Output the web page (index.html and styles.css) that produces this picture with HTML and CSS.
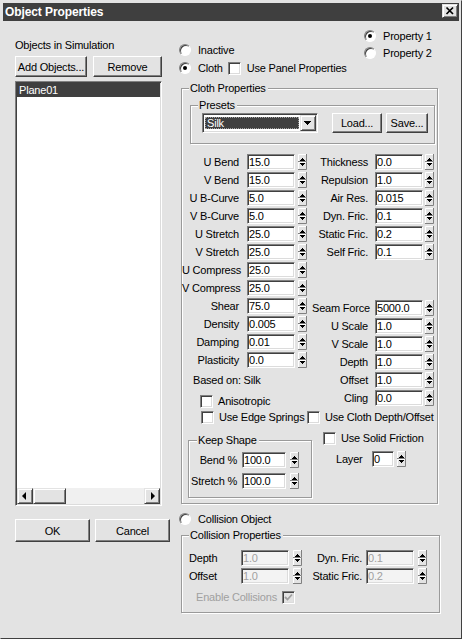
FILE: index.html
```html
<!DOCTYPE html>
<html lang="en">
<head>
<meta charset="utf-8">
<title>Object Properties</title>
<link rel="stylesheet" href="styles.css">
</head>
<body>
<svg class="defs" width="0" height="0" aria-hidden="true">
  <symbol id="spin" viewBox="0 0 9 16">
    <rect width="9" height="16" fill="#e3e3e3"/>
    <path d="M0.5 7.5V0.5H8.5M0.5 15.5V8.5H8.5" stroke="#fff" fill="none"/>
    <path d="M8.5 0V7.5H0M8.5 8V15.5H0" stroke="#808080" fill="none"/>
    <path d="M4 4h1v1h1v1h1v1H2V6h1V5h1z M2 9h5v1h-1v1h-1v1h-1v-1h-1v-1h-1z" fill="#000"/>
  </symbol>
</svg>
<div class="win">
  <div class="titlebar">
    <span class="ttl">Object Properties</span>
    <span class="closebtn rb"><svg width="14" height="12" viewBox="0 0 14 12"><path d="M3.5 2.5L10 9M10 2.5L3.5 9" stroke="#000" stroke-width="1.7" fill="none"/></svg></span>
  </div>
  <div class="main">
    <div class="leftcol">
      <div class="cap">Objects in Simulation</div>
      <div class="btnrow">
        <div class="btn w-add">Add Objects...</div>
        <div class="btn w-rem">Remove</div>
      </div>
      <div class="list">
        <div class="item">Plane01</div>
        <div class="listspace"></div>
        <div class="hscroll">
          <div class="rb sbtn"><svg width="14" height="14" viewBox="0 0 14 14"><path d="M8 3v8L4 7z" fill="#000"/></svg></div>
          <div class="rb thumb"></div>
          <div class="track"></div>
          <div class="rb sbtn"><svg width="14" height="14" viewBox="0 0 14 14"><path d="M6 3v8l4-4z" fill="#000"/></svg></div>
        </div>
      </div>
      <div class="okrow">
        <div class="btn w-ok">OK</div>
        <div class="btn w-ok">Cancel</div>
      </div>
    </div>
    <div class="rightcol">
      <div class="topopts">
        <div class="modes">
          <div class="opt"><span class="rd"></span>Inactive</div>
          <div class="opt"><span class="rd on"></span>Cloth<span class="cb panelcb"></span><span class="cbt">Use Panel Properties</span></div>
        </div>
        <div class="props">
          <div class="opt"><span class="rd on"></span>Property 1</div>
          <div class="opt"><span class="rd"></span>Property 2</div>
        </div>
      </div>
      <div class="grp cloth">
        <div class="gt">Cloth Properties</div>
        <div class="grp presets">
          <div class="gt">Presets</div>
          <div class="prow">
            <div class="combo">
              <div class="sel">Silk</div>
              <div class="rb carrow"><svg width="14" height="14" viewBox="0 0 14 14"><path d="M3 5h7v1h-1v1h-1v1h-1v1h-1v-1h-1v-1h-1v-1h-1z" fill="#000"/></svg></div>
            </div>
            <div class="btn w-load">Load...</div>
            <div class="btn w-save">Save...</div>
          </div>
        </div>
        <div class="params">
          <div class="pcol pl">
            <div class="f"><span class="lb">U Bend</span><span class="tb">15.0</span><svg class="spin"><use href="#spin"/></svg></div>
            <div class="f"><span class="lb">V Bend</span><span class="tb">15.0</span><svg class="spin"><use href="#spin"/></svg></div>
            <div class="f"><span class="lb">U B-Curve</span><span class="tb">5.0</span><svg class="spin"><use href="#spin"/></svg></div>
            <div class="f"><span class="lb">V B-Curve</span><span class="tb">5.0</span><svg class="spin"><use href="#spin"/></svg></div>
            <div class="f"><span class="lb">U Stretch</span><span class="tb">25.0</span><svg class="spin"><use href="#spin"/></svg></div>
            <div class="f"><span class="lb">V Stretch</span><span class="tb">25.0</span><svg class="spin"><use href="#spin"/></svg></div>
            <div class="f"><span class="lb">U Compress</span><span class="tb">25.0</span><svg class="spin"><use href="#spin"/></svg></div>
            <div class="f"><span class="lb">V Compress</span><span class="tb">25.0</span><svg class="spin"><use href="#spin"/></svg></div>
            <div class="f"><span class="lb">Shear</span><span class="tb">75.0</span><svg class="spin"><use href="#spin"/></svg></div>
            <div class="f"><span class="lb">Density</span><span class="tb">0.005</span><svg class="spin"><use href="#spin"/></svg></div>
            <div class="f"><span class="lb">Damping</span><span class="tb">0.01</span><svg class="spin"><use href="#spin"/></svg></div>
            <div class="f"><span class="lb">Plasticity</span><span class="tb">0.0</span><svg class="spin"><use href="#spin"/></svg></div>
            <div class="based">Based on: Silk</div>
            <div class="opt aniso"><span class="cb"></span><span class="cbt">Anisotropic</span></div>
          </div>
          <div class="pcol pr">
            <div class="f"><span class="lb">Thickness</span><span class="tb">0.0</span><svg class="spin"><use href="#spin"/></svg></div>
            <div class="f"><span class="lb">Repulsion</span><span class="tb">1.0</span><svg class="spin"><use href="#spin"/></svg></div>
            <div class="f"><span class="lb">Air Res.</span><span class="tb">0.015</span><svg class="spin"><use href="#spin"/></svg></div>
            <div class="f"><span class="lb">Dyn. Fric.</span><span class="tb">0.1</span><svg class="spin"><use href="#spin"/></svg></div>
            <div class="f"><span class="lb">Static Fric.</span><span class="tb">0.2</span><svg class="spin"><use href="#spin"/></svg></div>
            <div class="f"><span class="lb">Self Fric.</span><span class="tb">0.1</span><svg class="spin"><use href="#spin"/></svg></div>
            <div class="pgap"></div>
            <div class="f"><span class="lb">Seam Force</span><span class="tb">5000.0</span><svg class="spin"><use href="#spin"/></svg></div>
            <div class="f"><span class="lb">U Scale</span><span class="tb">1.0</span><svg class="spin"><use href="#spin"/></svg></div>
            <div class="f"><span class="lb">V Scale</span><span class="tb">1.0</span><svg class="spin"><use href="#spin"/></svg></div>
            <div class="f"><span class="lb">Depth</span><span class="tb">1.0</span><svg class="spin"><use href="#spin"/></svg></div>
            <div class="f"><span class="lb">Offset</span><span class="tb">1.0</span><svg class="spin"><use href="#spin"/></svg></div>
            <div class="f"><span class="lb">Cling</span><span class="tb">0.0</span><svg class="spin"><use href="#spin"/></svg></div>
          </div>
        </div>
        <div class="opt edge">
          <span class="c1"><span class="cb"></span><span class="cbt">Use Edge Springs</span></span>
          <span class="cb"></span><span class="cbt">Use Cloth Depth/Offset</span>
        </div>
        <div class="bottom">
          <div class="grp keep">
            <div class="gt">Keep Shape</div>
            <div class="kf k1"><span class="lb">Bend %</span><span class="tb">100.0</span><svg class="spin"><use href="#spin"/></svg></div>
            <div class="kf k2"><span class="lb">Stretch %</span><span class="tb">100.0</span><svg class="spin"><use href="#spin"/></svg></div>
          </div>
          <div class="rside">
            <div class="opt"><span class="cb"></span><span class="cbt">Use Solid Friction</span></div>
            <div class="f layer"><span class="lb">Layer</span><span class="tb">0</span><svg class="spin"><use href="#spin"/></svg></div>
          </div>
        </div>
      </div>
      <div class="opt collobj"><span class="rd"></span>Collision Object</div>
      <div class="grp coll">
        <div class="gt">Collision Properties</div>
        <div class="crow">
          <div class="ccl">
            <div class="f"><span class="lb">Depth</span><span class="tb dis">1.0</span><svg class="spin"><use href="#spin"/></svg></div>
            <div class="f"><span class="lb">Offset</span><span class="tb dis">1.0</span><svg class="spin"><use href="#spin"/></svg></div>
          </div>
          <div class="ccr">
            <div class="f"><span class="lb">Dyn. Fric.</span><span class="tb dis">0.1</span><svg class="spin"><use href="#spin"/></svg></div>
            <div class="f"><span class="lb">Static Fric.</span><span class="tb dis">0.2</span><svg class="spin"><use href="#spin"/></svg></div>
          </div>
        </div>
        <div class="opt enable">Enable Collisions<span class="cb"><svg width="9" height="9" viewBox="0 0 9 9"><path d="M1 4l2.5 2.5L8 1.5" stroke="#a0a0a0" stroke-width="1.8" fill="none"/></svg></span></div>
      </div>
    </div>
  </div>
</div>
</body>
</html>
```

FILE: styles.css
```css
* { box-sizing: border-box; }
html, body { margin: 0; padding: 0; }
body {
  font-family: "Liberation Sans", Arial, sans-serif;
  font-size: 11px;
  letter-spacing: -0.2px;
  color: #000;
  background: #e3e3e3;
}
.defs { display: block; width: 0; height: 0; overflow: hidden; }

.win {
  width: 462px;
  height: 639px;
  border: 1px solid;
  border-color: #e3e3e3 #404040 #404040 #e3e3e3;
  padding: 2px;
  background: #e3e3e3;
  display: flex;
  flex-direction: column;
}
.titlebar {
  height: 18px;
  flex: none;
  background: #3f3f3f;
  color: #fff;
  display: flex;
  align-items: flex-start;
  padding-left: 2px;
}
.ttl { font-weight: bold; font-size: 12px; letter-spacing: -0.1px; line-height: 18px; }
.closebtn {
  margin-left: auto;
  margin-top: 1px;
  margin-right: 1px;
  width: 16px;
  height: 14px;
  display: flex;
  align-items: center;
  justify-content: center;
}

.rb {
  background: #e3e3e3;
  border: 1px solid;
  border-color: #e3e3e3 #404040 #404040 #e3e3e3;
  box-shadow: inset 1px 1px #fff, inset -1px -1px #808080;
}
.btn {
  background: #e3e3e3;
  border: 1px solid;
  border-color: #fff #404040 #404040 #fff;
  box-shadow: inset -1px -1px #808080;
  display: flex;
  align-items: center;
  justify-content: center;
  white-space: nowrap;
  height: 21px;
  flex: none;
}

.main { display: flex; flex: 1; }
.leftcol { width: 155px; margin-left: 12px; display: flex; flex-direction: column; flex: none; }
.cap { margin-top: 17px; height: 14px; line-height: 14px; }
.btnrow { display: flex; margin-top: 4px; }
.w-add { width: 72px; }
.w-rem { width: 69px; margin-left: 6px; }
.list {
  margin-top: 4px;
  width: 147px;
  height: 425px;
  background: #fff;
  border: 1px solid;
  border-color: #808080 #fff #fff #808080;
  box-shadow: inset 1px 1px #404040, inset -1px -1px #dcdcdc;
  padding: 1px;
  display: flex;
  flex-direction: column;
}
.item { height: 14px; line-height: 14px; background: #3f3f3f; color: #fff; padding-left: 2px; }
.listspace { flex: 1; }
.hscroll { height: 16px; display: flex; background: #f0f0f0; }
.sbtn { width: 16px; height: 16px; display: flex; align-items: center; justify-content: center; }
.thumb { width: 33px; height: 16px; }
.track { flex: 1; }
.okrow { display: flex; margin-top: 13px; }
.w-ok { width: 75px; height: 23px; }
.w-ok + .w-ok { margin-left: 5px; }

.rightcol { margin-left: 9px; width: 261px; flex: none; display: flex; flex-direction: column; }
.topopts { height: 67px; display: flex; flex: none; }
.modes { margin-top: 22px; display: flex; flex-direction: column; gap: 4px; }
.props { margin-left: auto; width: 76px; margin-top: 8px; display: flex; flex-direction: column; gap: 3px; }
.opt { display: flex; align-items: center; height: 14px; white-space: nowrap; flex: none; }
.rd {
  width: 12px;
  height: 12px;
  border-radius: 50%;
  background: #fff;
  border: 1px solid;
  border-color: #808080 #fff #fff #808080;
  box-shadow: inset 1px 1px #404040;
  margin-right: 7px;
  display: flex;
  align-items: center;
  justify-content: center;
  flex: none;
}
.rd.on::after { content: ""; width: 4px; height: 4px; border-radius: 50%; background: #000; }
.cb {
  width: 13px;
  height: 13px;
  background: #fff;
  border: 1px solid;
  border-color: #808080 #fff #fff #808080;
  box-shadow: inset 1px 1px #404040, inset -1px -1px #dcdcdc;
  flex: none;
  display: flex;
  align-items: center;
  justify-content: center;
}
.cbt { margin-left: 5px; }
.panelcb { margin-left: 5px; }
.panelcb + .cbt { margin-left: 6px; }

.grp { border: 1px solid #9a9a9a; box-shadow: inset 1px 1px #fff, 1px 1px #fff; flex: none; }
.gt {
  margin-top: -8px;
  height: 14px;
  line-height: 14px;
  padding: 0 2px 0 1px;
  background: #e3e3e3;
  width: max-content;
  white-space: nowrap;
}

.cloth { margin-left: 2px; width: 257px; height: 416px; }
.cloth > .gt { margin-left: 7px; }
.presets { margin: 10px 0 0 8px; width: 245px; height: 39px; }
.presets > .gt { margin-left: 7px; }
.prow { display: flex; margin: 1px 0 0 11px; }
.combo {
  width: 116px;
  height: 20px;
  display: flex;
  background: #fff;
  border: 1px solid;
  border-color: #808080 #fff #fff #808080;
  box-shadow: inset 1px 1px #404040, inset -1px -1px #dcdcdc;
  padding: 1px;
  flex: none;
}
.sel {
  flex: 1;
  margin: 2px 1px;
  background: #3f3f3f;
  color: #fff;
  padding-left: 2px;
  line-height: 12px;
  outline: 1px dotted #a0a0a0;
  outline-offset: -1px;
}
.carrow { width: 16px; height: 16px; flex: none; display: flex; align-items: center; justify-content: center; }
.w-load { width: 50px; height: 20px; margin-left: 14px; }
.w-save { width: 42px; height: 20px; margin-left: 4px; }

.params { display: flex; margin-top: 9px; }
.pl { width: 125px; flex: none; }
.pr { margin-left: 5px; }
.f { display: flex; align-items: center; height: 18px; }
.lb { white-space: nowrap; flex: none; }
.tb {
  width: 48px;
  height: 16px;
  flex: none;
  background: #fff;
  border: 1px solid;
  border-color: #808080 #fff #fff #808080;
  box-shadow: inset 1px 1px #404040, inset -1px -1px #dcdcdc;
  padding-left: 1px;
  display: flex;
  align-items: center;
  white-space: nowrap;
  overflow: hidden;
}
.tb.dis { background: #f3f3f3; color: #a0a0a0; }
.spin { width: 9px; height: 16px; flex: none; margin-left: 3px; }
.pl .lb { width: 57px; text-align: right; }
.pl .tb { margin-left: 8px; }
.pr .lb { width: 56px; text-align: right; }
.pr .tb { margin-left: 7px; }
.pr .spin { margin-left: 2px; }
.pgap { height: 38px; }
.based { margin: 4px 0 0 11px; height: 14px; line-height: 14px; white-space: nowrap; }
.aniso { margin: 7px 0 0 18px; }
.edge { margin: 2px 0 0 19px; }
.edge .c1 { width: 106px; display: flex; align-items: center; flex: none; }

.bottom { display: flex; align-items: flex-start; }
.keep { margin: 16px 0 0 6px; width: 124px; height: 58px; }
.keep > .gt { margin-left: 8px; }
.kf { display: flex; align-items: center; height: 18px; }
.k1 { margin-top: 4px; }
.k2 { margin-top: 3px; }
.keep .lb { width: 48px; text-align: right; }
.keep .tb { margin-left: 5px; width: 44px; }
.keep .spin { margin-left: 4px; }
.rside { margin: 7px 0 0 11px; }
.layer { margin: 6px 0 0 13px; height: 16px; }
.layer .lb { width: 26px; }
.layer .tb { margin-left: 10px; width: 22px; }
.layer .spin { margin-left: 3px; }

.collobj { margin-top: 8px; }
.coll { margin: 9px 0 0 2px; width: 259px; height: 78px; }
.coll > .gt { margin-left: 7px; }
.crow { display: flex; margin-top: 7px; }
.ccl { margin-left: 7px; }
.ccl .lb { width: 52px; }
.ccl .spin { margin-left: 4px; }
.ccr { margin-left: 10px; }
.ccr .lb { width: 50px; text-align: right; }
.ccr .tb { margin-left: 4px; }
.ccr .spin { margin-left: 4px; }
.enable { margin: 5px 0 0 14px; color: #a0a0a0; }
.enable .cb { margin-left: 5px; background: #e3e3e3; }
```
